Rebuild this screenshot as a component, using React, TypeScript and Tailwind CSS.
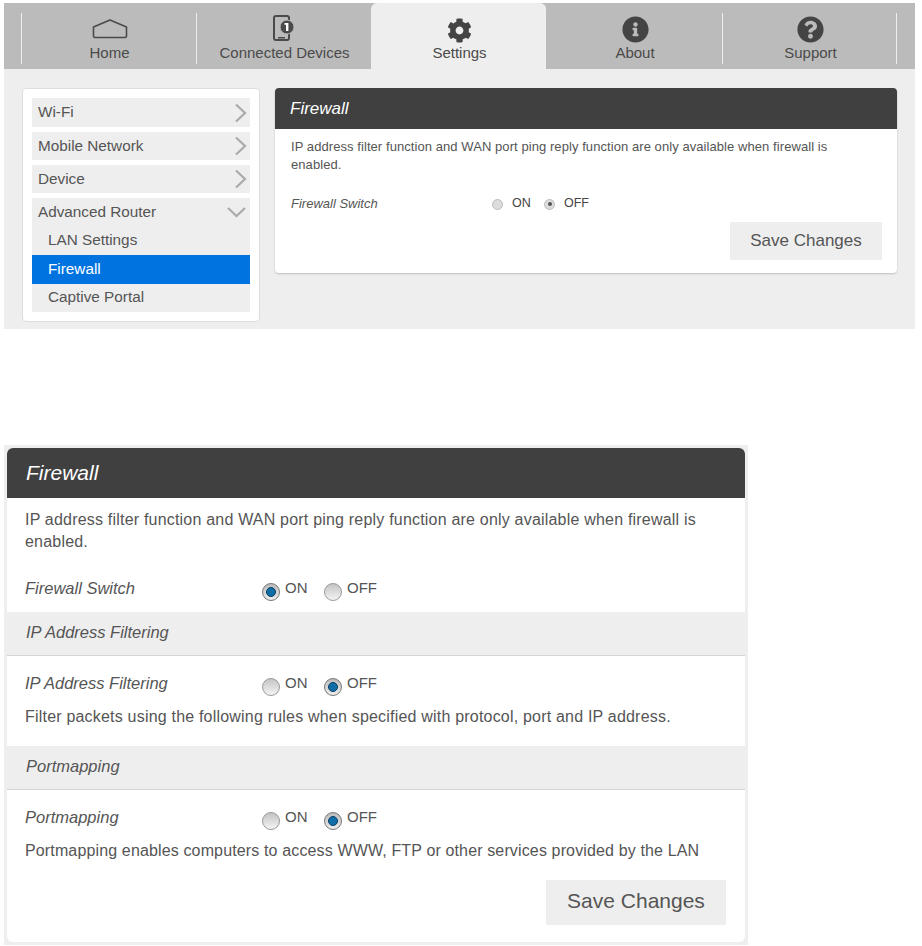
import React from "react";
import { FaCog, FaInfoCircle, FaQuestionCircle } from "react-icons/fa";

const HomeIcon = () => (
  <svg width="36" height="20" viewBox="0 0 36 20" fill="none" stroke="#4a4a4a" strokeWidth="1.6">
    <path d="M1.5 8 L18 1 L34.5 8 V17 Q34.5 18.5 33 18.5 H3 Q1.5 18.5 1.5 17 Z" strokeLinejoin="round" />
  </svg>
);

const DeviceIcon = () => (
  <svg width="24" height="26" viewBox="0 0 24 26">
    <rect x="1" y="1" width="15" height="24" rx="2" fill="none" stroke="#4a4a4a" strokeWidth="2" />
    <rect x="5" y="22" width="7" height="1.5" fill="#4a4a4a" />
    <circle cx="14" cy="12" r="7" fill="#4a4a4a" stroke="#bbbbbb" strokeWidth="1" />
    <rect x="13" y="8" width="2.4" height="8" fill="#fff" />
    <rect x="11.5" y="8" width="2" height="1.8" fill="#fff" />
  </svg>
);

const tabs = [
  { label: "Home", width: "w-[175px]", icon: <div className="pb-[4px]"><HomeIcon /></div> },
  { label: "Connected Devices", width: "w-[175px]", icon: <div className="pb-[2px]"><DeviceIcon /></div> },
  { label: "Settings", width: "w-[175px]", icon: <FaCog size={25} color="#444" />, active: true },
  { label: "About", width: "w-[176px]", icon: <FaInfoCircle size={27} color="#444" /> },
  { label: "Support", width: "w-[175px]", icon: <FaQuestionCircle size={27} color="#444" /> },
];

const Chevron = ({ down }: { down?: boolean }) => (
  <svg width="20" height="20" viewBox="0 0 20 20" fill="none" stroke="#aaaaaa" strokeWidth="2.2">
    {down ? <path d="M1 6 L9.5 14 L18 6" /> : <path d="M9 1.5 L18 10 L9 18.5" />}
  </svg>
);

function SmallRadio({ on, label }: { on?: boolean; label: string }) {
  return (
    <span className="flex items-center gap-[9px]">
      <span className="w-[11px] h-[11px] rounded-full border border-[#bdbdbd] bg-[#dcdcdc] flex items-center justify-center">
        {on && <span className="w-[4px] h-[4px] rounded-full bg-[#555]" />}
      </span>
      <span className="text-[12.5px] text-[#444] relative -top-px">{label}</span>
    </span>
  );
}

function BigRadio({ on, label }: { on?: boolean; label: string }) {
  return (
    <span className="flex items-start mt-[1px]">
      <span
        className={
          "mt-[4px] w-[18px] h-[18px] rounded-full border flex items-center justify-center " +
          (on ? "border-[#777] bg-linear-to-b from-[#bbbbbb] to-[#eeeeee]" : "border-[#999] bg-linear-to-b from-[#c4c4c4] to-[#f4f4f4]")
        }
      >
        {on && <span className="w-[10px] h-[10px] rounded-full bg-[#0f6ea8] border border-[#0a3f63]" />}
      </span>
      <span className="ml-[5px] text-[15px] leading-[18px] text-[#555]">{label}</span>
    </span>
  );
}

function BigSwitch({ title, on }: { title: string; on: boolean }) {
  return (
    <div className="flex items-start h-[24px]">
      <span className="w-[237px] italic text-[16.5px] leading-[20px] text-[#555]">{title}</span>
      <span className="w-[62px]"><BigRadio on={on} label="ON" /></span>
      <BigRadio on={!on} label="OFF" />
    </div>
  );
}

function Band({ title }: { title: string }) {
  return (
    <div className="h-[44px] bg-[#eeeeee] border-b border-[#d4d4d4] pl-[19px] pb-[3px] flex items-center italic text-[16.5px] text-[#555]">
      {title}
    </div>
  );
}

export default function App() {
  return (
    <div className="w-[922px] h-[946px] bg-white overflow-hidden font-['Liberation_Sans',Arial,sans-serif]">
      {/* router page */}
      <div className="mt-[3px] ml-[4px] w-[911px] h-[326px] bg-[#eeeeee]">
        <div className="h-[66px] bg-[#bbbbbb] pl-[17px] flex">
          {tabs.map((t, i) => (
            <div
              key={i}
              className={
                t.width +
                " h-[66px] pl-[2px] flex flex-col items-center " +
                (t.active ? "bg-[#eeeeee] rounded-t-[6px]" : "relative")
              }
            >
              <div className="h-[41px] w-full flex items-end justify-center pb-[1px]">{t.icon}</div>
              <div className="text-[15px] leading-[18px] text-[#4a4a4a] whitespace-nowrap">{t.label}</div>
              {(i === 0 || i === 1 || i === 4) && <span className="absolute left-0 top-[10px] h-[51px] w-px bg-[#eeeeee]" />}
              {i === 4 && <span className="absolute right-0 top-[10px] h-[51px] w-px bg-[#eeeeee]" />}
            </div>
          ))}
        </div>

        <div className="flex items-start pl-[18px] pt-[19px] gap-[15px]">
          <div className="w-[238px] h-[234px] bg-white border border-[#dddddd] rounded-[4px] px-[9px] pt-[9px] flex flex-col gap-[5px]">
            {["Wi-Fi", "Mobile Network", "Device"].map((m, i) => (
              <div
                key={m}
                className={
                  (i === 0 ? "h-[29px]" : "h-[28px]") +
                  " bg-[#eeeeee] pl-[6px] pr-[3px] flex items-center justify-between text-[15.3px] text-[#555]"
                }
              >
                {m}
                <Chevron />
              </div>
            ))}
            <div className="bg-[#eeeeee] text-[15.3px] text-[#555]">
              <div className="h-[28px] pl-[6px] pr-[3px] flex items-center justify-between">
                Advanced Router
                <Chevron down />
              </div>
              <div className="h-[29px] pl-[16px] flex items-center">LAN Settings</div>
              <div className="h-[29px] pl-[16px] flex items-center bg-[#0073e0] text-white">Firewall</div>
              <div className="h-[28px] pb-[1px] pl-[16px] flex items-center">Captive Portal</div>
            </div>
          </div>

          <div className="w-[622px] h-[185px] bg-white rounded-[4px] shadow-[0_1px_2px_rgba(0,0,0,0.2)] overflow-hidden">
            <div className="h-[41px] bg-[#404040] pl-[15px] flex items-center italic text-[17px] text-white">Firewall</div>
            <div className="pl-[16px] pr-[15px] pt-[7px]">
              <p className="max-w-[560px] pt-[2px] text-[13px] tracking-[0.07px] leading-[18px] text-[#555]">
                IP address filter function and WAN port ping reply function are only available when firewall is enabled.
              </p>
              <div className="mt-[21px] flex items-center h-[18px]">
                <span className="w-[201px] italic text-[13px] text-[#555]">Firewall Switch</span>
                <span className="w-[52px]"><SmallRadio label="ON" /></span>
                <SmallRadio on label="OFF" />
              </div>
              <div className="mt-[9px] flex justify-end">
                <div className="w-[152px] h-[38px] bg-[#eeeeee] flex items-center justify-center text-[17px] text-[#555]">
                  Save Changes
                </div>
              </div>
            </div>
          </div>
        </div>
      </div>

      {/* enabled state, larger */}
      <div className="mt-[116px] ml-[4px] w-[744px] h-[500px] bg-[#eeeeee] p-[3px]">
        <div className="h-[494px] bg-white rounded-[6px] overflow-hidden">
          <div className="h-[50px] bg-[#404040] pl-[19px] flex items-center italic text-[21px] text-white">Firewall</div>
          <div className="px-[18px] pt-[11px] h-[114px]">
            <p className="text-[16px] tracking-[0.2px] leading-[22px] text-[#555]">
              IP address filter function and WAN port ping reply function are only available when firewall is enabled.
            </p>
            <div className="mt-[25px]"><BigSwitch title="Firewall Switch" on /></div>
          </div>
          <Band title="IP Address Filtering" />
          <div className="px-[18px] pt-[17px] h-[90px]">
            <BigSwitch title="IP Address Filtering" on={false} />
            <p className="mt-[10px] text-[16px] tracking-[0.2px] leading-[20px] text-[#555]">
              Filter packets using the following rules when specified with protocol, port and IP address.
            </p>
          </div>
          <Band title="Portmapping" />
          <div className="px-[18px] pt-[17px]">
            <BigSwitch title="Portmapping" on={false} />
            <p className="mt-[10px] text-[16px] tracking-[0.14px] leading-[20px] text-[#555]">
              Portmapping enables computers to access WWW, FTP or other services provided by the LAN
            </p>
            <div className="mt-[19px] flex justify-end pr-[1px]">
              <div className="w-[180px] h-[45px] bg-[#eeeeee] pb-[3px] flex items-center justify-center text-[21px] text-[#555]">
                Save Changes
              </div>
            </div>
          </div>
        </div>
      </div>
    </div>
  );
}
